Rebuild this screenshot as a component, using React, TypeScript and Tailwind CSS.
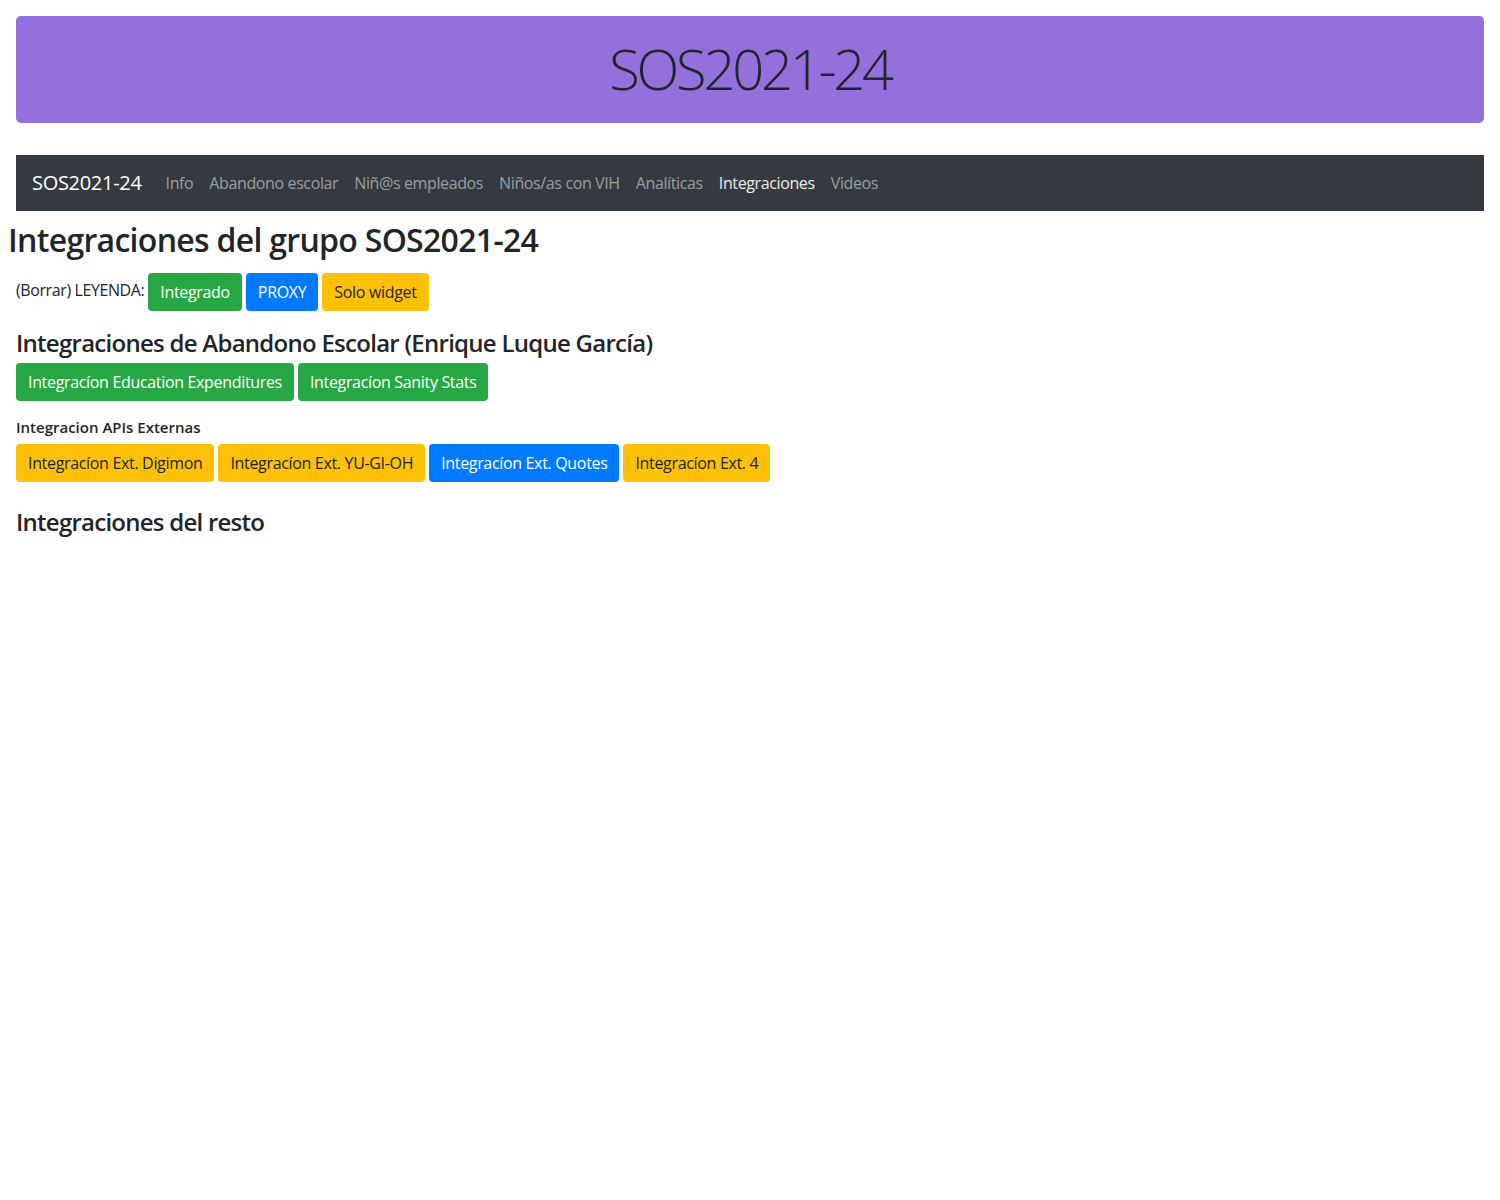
const navLinks = [
  { label: 'Info' },
  { label: 'Abandono escolar' },
  { label: 'Niñ@s empleados' },
  { label: 'Niños/as con VIH' },
  { label: 'Analíticas' },
  { label: 'Integraciones', active: true },
  { label: 'Videos' },
];

const variants = {
  green: 'bg-[#28a745] text-white',
  blue: 'bg-[#007bff] text-white',
  yellow: 'bg-[#ffc107] text-[#212529]',
};

function Btn({ color, children }: { color: keyof typeof variants; children: string }) {
  return (
    <button className={`h-[38px] px-3 rounded-[4px] text-[16px] leading-6 tracking-[-0.33px] ${variants[color]}`}>
      {children}
    </button>
  );
}

export default function App() {
  return (
    <div className="min-h-[1200px] bg-white text-[#212529] font-['Open_Sans',sans-serif]">
      <div className="px-4 pt-4">
        <div className="h-[107px] rounded-[5px] bg-[#9370db] flex items-center justify-center">
          <h1 className="text-[56px] font-light leading-none tracking-[-3.2px] -mt-1">SOS2021-24</h1>
        </div>
      </div>

      <nav className="mx-4 mt-8 h-14 bg-[#343a40] flex items-center px-4">
        <span className="text-[20px] text-white mr-4 tracking-[-0.3px]">SOS2021-24</span>
        <ul className="flex">
          {navLinks.map((l) => (
            <li
              key={l.label}
              className={`px-2 text-[16px] tracking-[-0.38px] ${l.active ? 'text-white/90' : 'text-white/50'}`}
            >
              {l.label}
            </li>
          ))}
        </ul>
      </nav>

      <h2 className="ml-2 mt-[10px] text-[32px] font-semibold leading-[38px] tracking-[-0.7px]">
        Integraciones del grupo SOS2021-24
      </h2>

      <div className="px-4 mt-[14px] flex items-center gap-1">
        <span className="text-[16px] tracking-[-0.4px] -mt-1">(Borrar) LEYENDA:</span>
        <Btn color="green">Integrado</Btn>
        <Btn color="blue">PROXY</Btn>
        <Btn color="yellow">Solo widget</Btn>
      </div>

      <div className="px-4">
        <h4 className="mt-[17px] text-[24px] font-semibold leading-[29px] tracking-[-0.73px]">
          Integraciones de Abandono Escolar (Enrique Luque García)
        </h4>
        <div className="mt-[6px] flex gap-1">
          <Btn color="green">Integracíon Education Expenditures</Btn>
          <Btn color="green">Integracíon Sanity Stats</Btn>
        </div>

        <h6 className="mt-[17px] text-[15px] font-semibold leading-[18px]">
          Integracion APIs Externas
        </h6>
        <div className="mt-[8px] flex gap-1">
          <Btn color="yellow">Integracíon Ext. Digimon</Btn>
          <Btn color="yellow">Integracíon Ext. YU-GI-OH</Btn>
          <Btn color="blue">Integracíon Ext. Quotes</Btn>
          <Btn color="yellow">Integracíon Ext. 4</Btn>
        </div>

        <h4 className="mt-[25px] text-[24px] font-semibold leading-[29px] tracking-[-0.75px]">
          Integraciones del resto
        </h4>
      </div>
    </div>
  );
}
